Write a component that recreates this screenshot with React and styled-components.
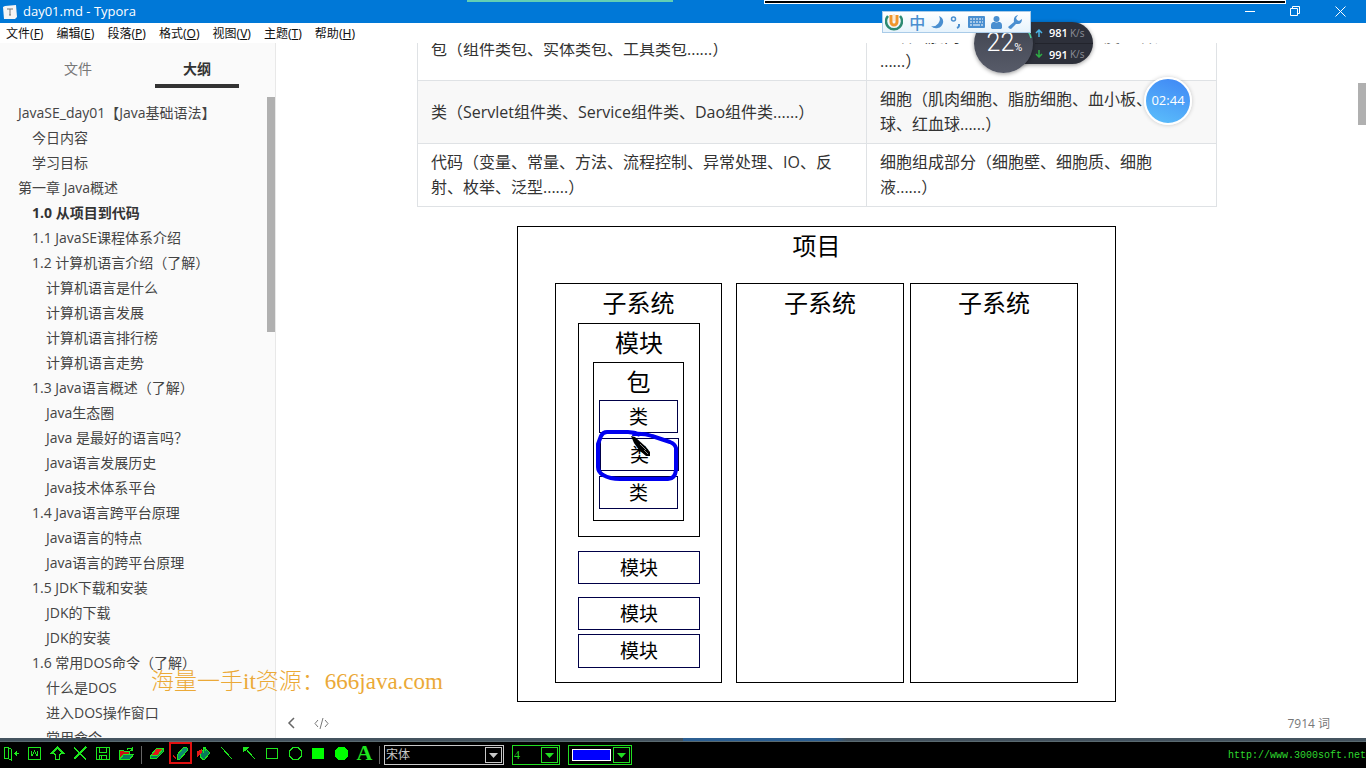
import React, { useState } from "react";
import styled, { createGlobalStyle, css } from "styled-components";

const GlobalStyle = createGlobalStyle`
  * {
    box-sizing: border-box;
  }
  body {
    margin: 0;
    background: #fff;
    color: #333;
    font-family: "Open Sans", "Noto Sans CJK SC", sans-serif;
    text-spacing-trim: space-all;
  }
  button {
    padding: 0;
    border: none;
    background: none;
    font: inherit;
    color: inherit;
  }
`;

const Window = styled.div`
  position: relative;
  display: flex;
  flex-direction: column;
  height: 100vh;
  overflow: hidden;
`;

/* ---------- title bar ---------- */

const TitleBar = styled.header`
  position: relative;
  display: flex;
  align-items: center;
  flex: none;
  height: 23px;
  padding: 0 20px 0 3px;
  background: #0078d7;
  color: #fff;
`;

const Title = styled.h1`
  flex: 1;
  margin: 0 0 0 6px;
  font-size: 13px;
  font-weight: 400;
  line-height: 23px;
`;

const WindowButtons = styled.div`
  display: flex;
  gap: 34px;

  button {
    display: flex;
  }
`;

const GreenEdge = styled.div`
  position: absolute;
  top: 0;
  left: 467px;
  width: 206px;
  height: 2px;
  background: #62cfb4;
`;

const BlackEdge = styled.div`
  position: absolute;
  top: 0;
  left: 764px;
  width: 522px;
  height: 4px;
  border: 1px solid #fff;
  background: #000;
`;

/* ---------- menu ---------- */

const MenuBar = styled.nav`
  display: flex;
  flex: none;
  gap: 13px;
  height: 20px;
  padding: 0 6px;

  button {
    color: #111;
    font-family: "Noto Sans", "Noto Sans CJK SC", sans-serif;
    font-size: 12px;
    line-height: 22px;
  }
`;

/* ---------- sidebar ---------- */

const Main = styled.div`
  display: flex;
  flex: 1;
  min-height: 0;
`;

const Sidebar = styled.aside`
  position: relative;
  display: flex;
  flex-direction: column;
  flex: none;
  width: 276px;
  border-right: 1px solid #e8e8e8;
  background: #fafafa;
  overflow: hidden;
`;

const Tabs = styled.div`
  display: flex;
  flex: none;
  justify-content: space-between;
  height: 45px;
  padding: 0 36px;
`;

const Tab = styled.button`
  width: 84px;
  padding-top: 8px;
  border-bottom: 4px solid transparent;
  color: #777;
  font-size: 14px;

  ${(p) =>
    p.$active &&
    css`
      border-bottom-color: #333;
      color: #333;
      font-weight: 700;
    `}
`;

const Outline = styled.ul`
  margin: 0;
  padding: 12px 0 0;
  list-style: none;
`;

const indents = { 1: 18, 2: 32, 3: 46 };

const OutlineItem = styled.li`
  padding-left: ${(p) => indents[p.$level]}px;
  font-size: 14px;
  line-height: 25px;
  font-weight: ${(p) => (p.$active ? 700 : 400)};
  white-space: nowrap;

  a {
    color: ${(p) => (p.$active ? "#333" : "#444")};
    text-decoration: none;
  }
`;

const ScrollThumb = styled.div`
  position: absolute;
  top: ${(p) => p.$top}px;
  right: 0;
  width: 8px;
  height: ${(p) => p.$size}px;
  background: #b0b0b0;
`;

/* ---------- document ---------- */

const Editor = styled.main`
  position: relative;
  flex: 1;
  min-width: 0;
  padding-right: 8px;
  overflow: hidden;
`;

const Page = styled.article`
  max-width: 800px;
  margin: -26px auto 0;
`;

const Table = styled.table`
  width: 100%;
  border-collapse: collapse;
  table-layout: fixed;
  font-size: 16px;
  line-height: 25px;

  col:first-child {
    width: 449px;
  }
  td {
    height: 63px;
    padding: 6px 13px;
    border: 1px solid #dfe2e5;
    vertical-align: middle;
    white-space: pre-line;
  }
  tr:nth-child(2) {
    background: #f8f8f8;
  }
`;

const Canvas = styled.div`
  position: relative;
  width: 600px;
  height: 476px;
  margin: 19px auto 0;
  color: #000;
  font-family: "Noto Sans CJK SC", sans-serif;

  svg {
    position: absolute;
    top: 200px;
    left: 71px;
  }
`;

const Node = styled.div`
  position: absolute;
  left: ${(p) => p.$x}px;
  top: ${(p) => p.$y}px;
  width: ${(p) => p.$w}px;
  height: ${(p) => p.$h}px;
  border: 1px solid ${(p) => (p.$leaf ? "#000048" : "#000")};
  font-size: ${(p) => (p.$leaf ? 19 : 24)}px;
  line-height: ${(p) => (p.$leaf ? 30 : 36)}px;
  text-align: center;
`;

const StatusBar = styled.footer`
  position: absolute;
  right: 0;
  bottom: 0;
  left: 0;
  display: flex;
  align-items: center;
  gap: 17px;
  height: 30px;
  padding: 0 36px 0 11px;
  color: #777;
  font-size: 12px;

  button {
    display: flex;
  }
  span {
    margin-left: auto;
  }
`;

/* ---------- drawing toolbar ---------- */

const Strip = styled.div`
  flex: none;
  height: 4px;
  border-bottom: 1px solid #5a6a70;
  background: linear-gradient(90deg, #44535f 50%, #2c5f92 50%, #2c5f92 61%, #44535f 62%);
`;

const DrawBar = styled.div`
  display: flex;
  align-items: center;
  flex: none;
  height: 26px;
  background: #000;
  color: #1ee61e;
`;

const Tool = styled.button`
  display: flex;
  align-items: center;
  align-self: flex-start;
  justify-content: center;
  width: 23px;
  height: 22px;
  border: ${(p) => (p.$active ? "2px solid #e01010" : "none")};
`;

const LetterTool = styled(Tool)`
  font-family: "Liberation Serif", serif;
  font-size: 22px;
  font-weight: 700;
`;

const Divider = styled.i`
  width: 1px;
  height: 18px;
  margin: 0 4px 0 3px;
  background: #666;
`;

const Picker = styled.label`
  position: relative;
  display: flex;
  align-items: center;
  width: ${(p) => p.$w}px;
  height: 20px;
  margin-right: 8px;
  padding: 1px;
  border: 1px solid ${(p) => p.$color};
  color: ${(p) => p.$color};

  select {
    flex: 1;
    min-width: 0;
    height: 16px;
    padding: 0;
    border: none;
    background: transparent;
    color: inherit;
    font-family: "Liberation Serif", "Noto Sans CJK SC", serif;
    font-size: 12px;
    appearance: none;
  }
`;

const Arrow = styled.span`
  display: flex;
  align-items: center;
  justify-content: center;
  width: 17px;
  height: 16px;
  border: 1px solid currentColor;
`;

const Swatch = styled.button`
  flex: 1;
  height: 12px;
  margin: 0 2px;
  border: 1px solid #fff;
  background: #00f;
`;

const SiteLink = styled.a`
  margin-left: auto;
  color: #2fd82f;
  font-family: "Liberation Mono", monospace;
  font-size: 10px;
  text-decoration: none;
`;

/* ---------- floating widgets ---------- */

const ImeBar = styled.div`
  position: absolute;
  z-index: 3;
  top: 11px;
  left: 882px;
  display: flex;
  align-items: center;
  justify-content: space-between;
  width: 149px;
  height: 22px;
  padding: 0 8px 0 2px;
  border: 1px solid #a9cbe8;
  background: linear-gradient(#fff, #e6f3fc);
`;

const ImeMode = styled.button`
  color: #4a8fd0;
  font-family: "Noto Sans CJK SC", sans-serif;
  font-size: 16px;
  font-weight: 500;
  line-height: 18px;
`;

const UsageDial = styled.div`
  position: absolute;
  z-index: 2;
  top: 14px;
  left: 974px;
  display: flex;
  align-items: baseline;
  justify-content: center;
  width: 59px;
  height: 59px;
  padding-left: 2px;
  border-radius: 50%;
  background: linear-gradient(#3d414c, #575b69);
  box-shadow: 0 1px 4px rgba(0, 0, 0, 0.4);
  color: #fff;
  font-family: Roboto, sans-serif;
  font-size: 25px;
  font-weight: 300;
  line-height: 58px;

  small {
    font-size: 11px;
    font-weight: 400;
  }
  svg {
    position: absolute;
    top: 17px;
    right: 1px;
  }
`;

const NetSpeed = styled.div`
  position: absolute;
  z-index: 1;
  top: 22px;
  left: 1003px;
  width: 90px;
  height: 42px;
  padding-left: 32px;
  border-radius: 0 21px 21px 0;
  background: #2d303a;
  box-shadow: 0 1px 4px rgba(0, 0, 0, 0.4);
  color: #fff;
  font-family: "Open Sans", sans-serif;
  font-size: 11px;
  font-weight: 600;

  div {
    display: flex;
    align-items: center;
    height: 21px;
  }
  div + div {
    border-top: 1px solid #22242c;
  }
  svg {
    margin-right: 6px;
  }
  small {
    margin-left: 2px;
    color: #8c8f98;
    font-size: 10px;
    font-weight: 400;
  }
`;

const Timer = styled.div`
  position: absolute;
  top: 77px;
  left: 1144px;
  width: 48px;
  height: 48px;
  border: 2px solid #fff;
  border-radius: 50%;
  background: linear-gradient(200deg, #3f86f5, #5cc0fb);
  box-shadow: 0 0 4px rgba(0, 0, 0, 0.2);
  color: #fff;
  font-size: 13px;
  line-height: 43px;
  text-align: center;
`;

const Watermark = styled.p`
  position: absolute;
  top: 666px;
  left: 151px;
  margin: 0;
  color: #eba937;
  font-family: "Liberation Serif", "Noto Sans CJK SC", serif;
  font-size: 23px;
  font-weight: 300;
  line-height: 32px;
  white-space: nowrap;
`;

const menus = [
  ["文件", "F"],
  ["编辑", "E"],
  ["段落", "P"],
  ["格式", "O"],
  ["视图", "V"],
  ["主题", "T"],
  ["帮助", "H"],
];

const outline = [
  [1, "JavaSE_day01【Java基础语法】"],
  [2, "今日内容"],
  [2, "学习目标"],
  [1, "第一章 Java概述"],
  [2, "1.0 从项目到代码"],
  [2, "1.1 JavaSE课程体系介绍"],
  [2, "1.2 计算机语言介绍（了解）"],
  [3, "计算机语言是什么"],
  [3, "计算机语言发展"],
  [3, "计算机语言排行榜"],
  [3, "计算机语言走势"],
  [2, "1.3 Java语言概述（了解）"],
  [3, "Java生态圈"],
  [3, "Java 是最好的语言吗？"],
  [3, "Java语言发展历史"],
  [3, "Java技术体系平台"],
  [2, "1.4 Java语言跨平台原理"],
  [3, "Java语言的特点"],
  [3, "Java语言的跨平台原理"],
  [2, "1.5 JDK下载和安装"],
  [3, "JDK的下载"],
  [3, "JDK的安装"],
  [2, "1.6 常用DOS命令（了解）"],
  [3, "什么是DOS"],
  [3, "进入DOS操作窗口"],
  [3, "常用命令"],
];

const rows = [
  ["包（组件类包、实体类包、工具类包......）", "组织（肌肉组织、神经组织、上皮组织、\n......）"],
  ["类（Servlet组件类、Service组件类、Dao组件类......）", "细胞（肌肉细胞、脂肪细胞、血小板、白血球、红血球......）"],
  ["代码（变量、常量、方法、流程控制、异常处理、IO、反射、枚举、泛型......）", "细胞组成部分（细胞壁、细胞质、细胞液......）"],
];

const nodes = [
  { text: "项目", x: 0, y: 0, w: 599, h: 476 },
  { text: "子系统", x: 38, y: 57, w: 167, h: 400 },
  { text: "子系统", x: 219, y: 57, w: 168, h: 400 },
  { text: "子系统", x: 393, y: 57, w: 168, h: 400 },
  { text: "模块", x: 61, y: 97, w: 122, h: 214 },
  { text: "包", x: 76, y: 136, w: 91, h: 159 },
  { text: "类", x: 82, y: 174, w: 79, h: 33, leaf: true },
  { text: "类", x: 83, y: 212, w: 79, h: 33, leaf: true },
  { text: "类", x: 82, y: 250, w: 79, h: 33, leaf: true },
  { text: "模块", x: 61, y: 325, w: 122, h: 33, leaf: true },
  { text: "模块", x: 61, y: 371, w: 122, h: 33, leaf: true },
  { text: "模块", x: 61, y: 408, w: 122, h: 34, leaf: true },
];

const tools = [
  ["退出", <path d="M.5 1.500h4v11h-4zM4.500 1.500l3 2v11l-3-2M10 7.500h5M12.500 5v5M11.500 6v3" />],
  ["文字", <path d="M1.500 1.500h12v12h-12zM4 5l1 5 2.500-5 2.500 5 1-5" />],
  ["上移", <path d="M7.500 1.500l-6 6h3v1h1v5h4v-5h1v-1h3z" strokeWidth="1.500" />],
  ["清除", <path d="M1 2l12 11M13 1L1 13" strokeWidth="1.500" />],
  ["保存", <path d="M.5 1.500h13v12h-13zM3.500 1.500v5h7v-5M3.500 13.500v-4h7v4M5.500 10v3" />],
  [
    "打开",
    <>
      <path d="M.5 13.500v-9h4l1 1h5v3" fill="#c11" />
      <path d="M.5 13.500l4-5h10l-4 5z" fill="#087a5a" />
      <path d="M8 3.500q2-3 5 0M13.500 1v3h-3" />
    </>,
  ],
  null,
  [
    "橡皮",
    <>
      <path d="M.5 9.500l6-7h7l-6 7z" fill="#e31818" />
      <path d="M.5 9.500v3h6l7-7v-3l-6 7z" fill="#087a5a" />
    </>,
  ],
  [
    "画笔",
    <>
      <path d="M4 9l7-8 3 1v3l-7 8-3 1z" fill="#0a8a70" />
      <path d="M0 9l3 4" stroke="#c11" />
    </>,
  ],
  [
    "填充",
    <>
      <path d="M4 7l5-5 5 5-6 7-4-3z" fill="#087a5a" />
      <path d="M1 11V6l4-2v3z" fill="#e31818" stroke="#e31818" />
      <path d="M7.500 7V1h2v4" />
    </>,
  ],
  ["直线", <path d="M2 1l11 12" />],
  [
    "箭头",
    <>
      <path d="M2 1l11 12" />
      <path d="M1 1h6L1 6z" fill="currentColor" />
    </>,
  ],
  ["矩形", <path d="M1.500 2.500h11v10h-11z" />],
  ["椭圆", <path d="M5 1.500h5l3.500 3.500v5l-3.500 3.500H5l-3.500-3.500V5z" />],
  ["实心矩形", <path d="M1.500 2.500h11v10h-11z" fill="#0f0" stroke="#0f0" />],
  ["实心圆", <path d="M5 1.500h5l3.500 3.500v5l-3.500 3.500H5l-3.500-3.500V5z" fill="#0f0" stroke="#0f0" />],
];

const ToolIcon = ({ children }) => (
  <svg
    width="15"
    height="15"
    viewBox="0 0 15 15"
    fill="none"
    stroke="currentColor"
    shapeRendering="crispEdges"
  >
    {children}
  </svg>
);

const Triangle = () => (
  <svg width="9" height="5" viewBox="0 0 9 5" fill="currentColor">
    <path d="M0 0h9L4.500 5z" />
  </svg>
);

const App = () => {
  const [tab, setTab] = useState("大纲");
  const [tool, setTool] = useState("画笔");

  return (
    <Window>
      <GlobalStyle />
      <TitleBar>
        <GreenEdge />
        <BlackEdge />
        <svg width="14" height="14" viewBox="0 0 14 14">
          <path d="M0 2l2-1 11-1 1 12-2 2H1z" fill="#f4f4f4" />
          <path d="M4 4h6M7 4v6M6 10h2" stroke="#777" fill="none" />
        </svg>
        <Title>day01.md - Typora</Title>
        <WindowButtons>
          <button aria-label="最小化">
            <svg width="11" height="11" stroke="#fff"><path d="M0 5.500h10" /></svg>
          </button>
          <button aria-label="还原">
            <svg width="11" height="11" fill="none" stroke="#fff">
              <path d="M.5 2.500h7v7h-7zM2.500 2.500v-2h7v7h-2" />
            </svg>
          </button>
          <button aria-label="关闭">
            <svg width="11" height="11" stroke="#fff"><path d="M.5.5l10 10M10.500.5l-10 10" /></svg>
          </button>
        </WindowButtons>
      </TitleBar>

      <MenuBar>
        {menus.map(([name, key]) => (
          <button key={key}>
            {name}(<u>{key}</u>)
          </button>
        ))}
      </MenuBar>

      <Main>
        <Sidebar>
          <Tabs>
            {["文件", "大纲"].map((name) => (
              <Tab key={name} $active={tab === name} onClick={() => setTab(name)}>
                {name}
              </Tab>
            ))}
          </Tabs>
          <Outline>
            {outline.map(([level, text]) => (
              <OutlineItem key={text} $level={level} $active={text.startsWith("1.0")}>
                <a href="#doc">{text}</a>
              </OutlineItem>
            ))}
          </Outline>
          <ScrollThumb $top={54} $size={235} />
        </Sidebar>

        <Editor id="doc">
          <Page>
            <Table>
              <colgroup>
                <col />
                <col />
              </colgroup>
              <tbody>
                {rows.map(([left, right]) => (
                  <tr key={left}>
                    <td>{left}</td>
                    <td>{right}</td>
                  </tr>
                ))}
              </tbody>
            </Table>
            <Canvas>
              {nodes.map((n) => (
                <Node key={`${n.x}-${n.y}`} $x={n.x} $y={n.y} $w={n.w} $h={n.h} $leaf={n.leaf}>
                  {n.text}
                </Node>
              ))}
              <svg width="96" height="60" viewBox="0 0 96 60" fill="none">
                <path
                  d="M52 9Q46 6 40 6H19Q15 6 13 10L10 18V41Q10 46 15 49Q22 53 32 53H80Q87 53 88 44V22Q87 18 82 16L64 10Q56 7 44 8"
                  stroke="#0000f0"
                  strokeWidth="4"
                  strokeLinejoin="round"
                />
                <path d="M43 10l4 1 11 10 4 5v4h-4l-7-6-5-7z" fill="#000" />
                <path d="M52 18l6 6M56 24l4 4" stroke="#888" />
              </svg>
            </Canvas>
          </Page>
          <ScrollThumb $top={40} $size={42} />
          <StatusBar>
            <button aria-label="收起侧边栏">
              <svg width="10" height="12" fill="none" stroke="#666" strokeWidth="1.500">
                <path d="M7 1L2 6l5 5" />
              </svg>
            </button>
            <button aria-label="源代码模式">
              <svg width="15" height="11" fill="none" stroke="#777">
                <path d="M4 2L1 5.500 4 9M11 2l3 3.500L11 9M9 0L6 11" />
              </svg>
            </button>
            <span>7914 词</span>
          </StatusBar>
        </Editor>
      </Main>

      <Strip />
      <DrawBar>
        {tools.map((t) =>
          t ? (
            <Tool key={t[0]} aria-label={t[0]} $active={tool === t[0]} onClick={() => setTool(t[0])}>
              <ToolIcon>{t[1]}</ToolIcon>
            </Tool>
          ) : (
            <Divider key="divider" />
          )
        )}
        <LetterTool aria-label="字体">A</LetterTool>
        <Divider />
        <Picker $w={120} $color="#c8c8c8">
          <select aria-label="字体名称">
            <option>宋体</option>
          </select>
          <Arrow><Triangle /></Arrow>
        </Picker>
        <Picker $w={48} $color="#22dd22">
          <select aria-label="线宽">
            <option>4</option>
          </select>
          <Arrow><Triangle /></Arrow>
        </Picker>
        <Picker as="div" $w={64} $color="#22dd22">
          <Swatch aria-label="颜色" />
          <Arrow><Triangle /></Arrow>
        </Picker>
        <SiteLink href="http://www.3000soft.net">http://www.3000soft.net</SiteLink>
      </DrawBar>

      <NetSpeed>
        <div>
          <svg width="8" height="8" fill="none" stroke="#4ab4e8" strokeWidth="1.500">
            <path d="M4 8V1M1 4l3-3 3 3" />
          </svg>
          981<small>K/s</small>
        </div>
        <div>
          <svg width="8" height="8" fill="none" stroke="#2fae45" strokeWidth="1.500">
            <path d="M4 0v7M1 4l3 3 3-3" />
          </svg>
          991<small>K/s</small>
        </div>
      </NetSpeed>
      <UsageDial>
        22<small>%</small>
        <svg width="5" height="8" fill="none" stroke="#4fd6a0" strokeWidth="1.500">
          <path d="M1 0q2 3 3 7" />
        </svg>
      </UsageDial>
      <ImeBar>
        <svg width="18" height="18" viewBox="0 0 18 18" fill="none">
          <path d="M3 3a8 8 0 1 0 12 0" stroke="#2c8a72" strokeWidth="2.500" />
          <path d="M6 2v7a3 3 0 0 0 6 0V2" stroke="#f0962c" strokeWidth="3" />
          <path d="M9 1v7" stroke="#fbd9a8" />
        </svg>
        <ImeMode>中</ImeMode>
        <svg width="13" height="14" fill="#4a8fd0">
          <path d="M8 1a7 7 0 0 1-8 10 7 7 0 0 0 12-3q1-5-4-7z" />
        </svg>
        <svg width="11" height="14" fill="none" stroke="#4a8fd0" strokeWidth="1.500">
          <circle cx="3.500" cy="4" r="2" />
          <path d="M9 9v2q0 1-2 2" strokeWidth="2" />
        </svg>
        <svg width="17" height="12" viewBox="0 0 17 12">
          <rect width="17" height="12" rx="1" fill="#4a8fd0" />
          <path d="M2 3h13M2 6h13" stroke="#fff" strokeDasharray="2 1" />
          <path d="M2 9h2M5 9h7M13 9h2" stroke="#fff" />
        </svg>
        <svg width="11" height="13" fill="#4a8fd0">
          <circle cx="5.500" cy="3" r="3" />
          <path d="M2 6h2q1.500 1 3 0h2q2 1 2 3v3l-1 1H1l-1-1V9q0-2 2-3z" />
        </svg>
        <svg width="14" height="14" viewBox="0 0 14 14" fill="#4a8fd0">
          <path d="M10 0L8 3l1 2 2 1 3-2q0 5-4 5L8 9l-5 5q-2 0-3-2l6-5Q5 1 10 0z" />
        </svg>
      </ImeBar>
      <Timer>02:44</Timer>
      <Watermark>海量一手it资源：666java.com</Watermark>
    </Window>
  );
};

export default App;
